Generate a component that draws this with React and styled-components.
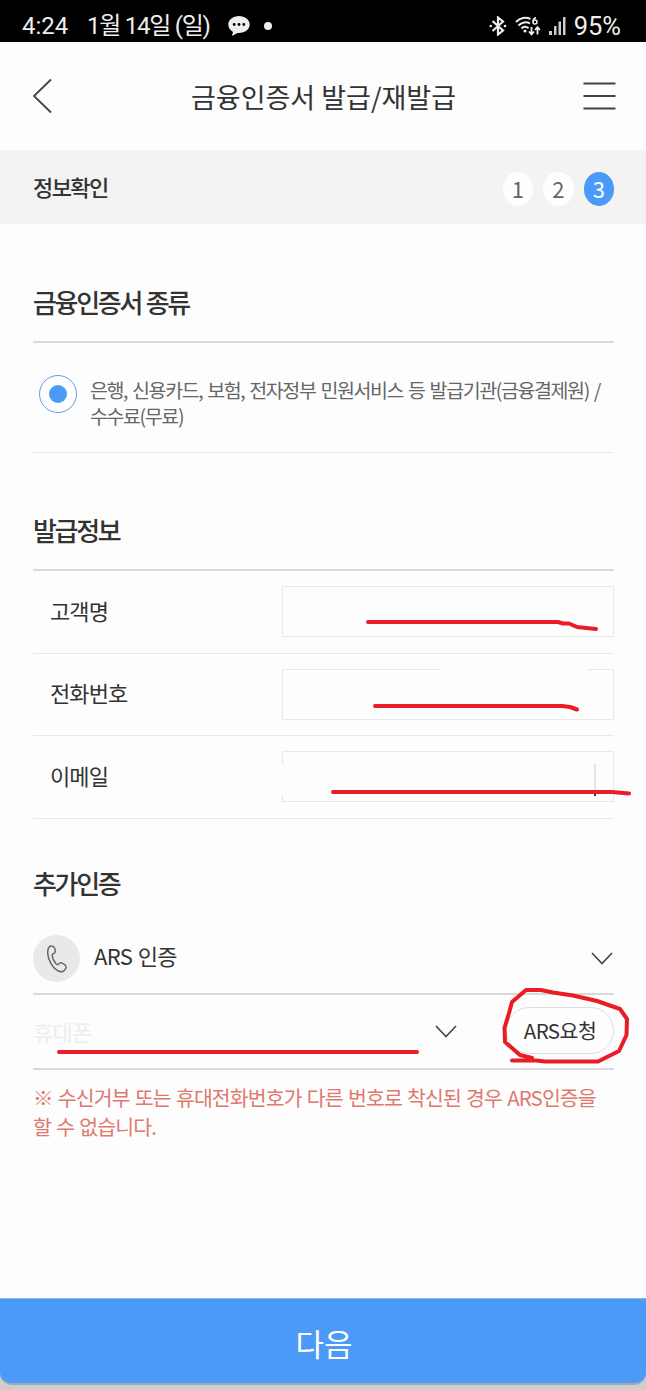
import React from 'react';
import styled, { createGlobalStyle } from 'styled-components';

const GlobalStyle = createGlobalStyle`
	* {
		box-sizing: border-box;
	}

	body {
		margin: 0;
		background: #fdfdfd;
		font-family: 'Noto Sans CJK KR', sans-serif;
		color: #333;
	}
`;

const Screen = styled.div`
	position: relative;
	display: flex;
	flex-direction: column;
	width: 646px;
	height: 1390px;
	overflow: hidden;
	background: #fdfdfd;
`;

const StatusBar = styled.header`
	display: flex;
	align-items: center;
	height: 42px;
	padding: 10px 25px 0 22px;
	background: #000;
	color: #eee;
	font-family: Roboto, 'Noto Sans CJK KR', sans-serif;
	font-size: 24px;
	line-height: 32px;
	white-space: nowrap;
`;

const Clock = styled.span`
	width: 65px;
`;

const Today = styled.span`
	width: 141px;
	letter-spacing: -1.25px;
`;

const StatusIcons = styled.div`
	display: flex;
	align-items: center;
	gap: 8px;
	margin-left: auto;
`;

const Battery = styled.span`
	font-size: 25.5px;
`;

const TitleBar = styled.nav`
	display: flex;
	align-items: center;
	justify-content: space-between;
	height: 108px;
	padding: 0 30px 0 32px;
`;

const Title = styled.h1`
	margin: 2px 0 0 10px;
	font-size: 27px;
	font-weight: 400;
	line-height: 40px;
	white-space: nowrap;
`;

const StepBar = styled.div`
	display: flex;
	align-items: center;
	justify-content: space-between;
	height: 74px;
	padding: 0 32px 0 33px;
	background: #f3f3f3;
`;

const StepName = styled.div`
	margin-top: -2px;
	font-size: 22px;
	font-weight: 500;
	letter-spacing: -1.6px;
`;

const Steps = styled.div`
	display: flex;
	gap: 10px;
	margin-top: 4px;
`;

const Step = styled.span`
	width: 30.5px;
	height: 34px;
	border-radius: 50%;
	background: ${({ $active }) => ($active ? '#4c9af8' : '#fefefe')};
	color: ${({ $active }) => ($active ? '#fff' : '#666')};
	font-size: 22px;
	line-height: 32px;
	text-align: center;
`;

const Content = styled.main`
	display: flex;
	flex: 1;
	flex-direction: column;
	padding: 0 32px 0 33px;
`;

const Heading = styled.h2`
	display: flex;
	align-items: flex-end;
	height: ${({ $height }) => $height}px;
	margin: 0;
	padding-bottom: ${({ $bottom }) => $bottom}px;
	border-bottom: ${({ $line }) => ($line ? '2px solid #d9d9d9' : 'none')};
	font-size: 26px;
	font-weight: 500;
	letter-spacing: -2.3px;
	line-height: 38px;
	word-spacing: 1px;
`;

const Option = styled.label`
	display: flex;
	gap: 13px;
	height: 110px;
	padding: 32px 0 0 6px;
	border-bottom: 1px solid #e8e8e8;
`;

const Radio = styled.span`
	display: grid;
	place-items: center;
	width: 38px;
	height: 38px;
	border: 1.5px solid #5c9fee;
	border-radius: 50%;

	&::after {
		content: '';
		width: 18px;
		height: 18px;
		border-radius: 50%;
		background: #4c9af8;
	}
`;

const OptionText = styled.span`
	padding-top: 2px;
	color: #666;
	font-size: 19.5px;
	letter-spacing: -1.4px;
	line-height: 26px;
	white-space: nowrap;
	word-spacing: 2px;
`;

const Field = styled.div`
	display: flex;
	align-items: center;
	justify-content: space-between;
	height: 82.5px;
	padding-left: 17px;
	border-bottom: 1px solid #e8e8e8;
`;

const FieldName = styled.span`
	margin-top: -4px;
	font-size: 22px;
	letter-spacing: -0.9px;
`;

const FieldBox = styled.div`
	position: relative;
	width: 332px;
	height: 51px;
	border: 1px solid #e8e8e8;
`;

// blanked-out part of a field, drawn over its border
const Blank = styled.span`
	position: absolute;
	top: ${({ $top }) => $top}px;
	left: ${({ $left }) => $left}px;
	width: ${({ $width }) => $width}px;
	height: ${({ $height }) => $height}px;
	background: #fefefe;
`;

const Cursor = styled.span`
	position: absolute;
	top: 12px;
	right: 17px;
	width: 2px;
	height: 32px;
	background: linear-gradient(#e4e4e4 28px, #333 28px);
`;

const MethodRow = styled.div`
	display: flex;
	align-items: center;
	height: 72px;
	padding-right: 1px;
	border-bottom: 2px solid #d9d9d9;
`;

const PhoneBadge = styled.span`
	display: grid;
	place-items: center;
	width: 47px;
	height: 47px;
	margin-top: 2px;
	border-radius: 50%;
	background: #e9e9e9;
`;

const MethodName = styled.span`
	flex: 1;
	margin: -5px 0 0 14px;
	font-size: 22px;
	letter-spacing: -0.6px;
	word-spacing: 1px;
`;

const NumberRow = styled.div`
	display: flex;
	align-items: center;
	height: 75px;
	border-bottom: 2px solid #d9d9d9;
`;

const NumberText = styled.span`
	flex: 1;
	color: #ededed;
	font-size: 22px;
	letter-spacing: -0.8px;
`;

const RequestButton = styled.button`
	width: 108px;
	height: 47px;
	margin: -2px 0 0 49px;
	padding: 0 0 1px;
	border: 1.5px solid #ddd;
	border-radius: 24px;
	background: #fefefe;
	color: #333;
	font-family: inherit;
	font-size: 20.5px;
	letter-spacing: -0.5px;
`;

const Warning = styled.p`
	margin: 13px 0 0;
	color: #e0786f;
	font-size: 20.5px;
	letter-spacing: -0.9px;
	line-height: 29px;
	white-space: nowrap;
	word-spacing: 1.5px;
`;

const Footer = styled.footer`
	height: 92px;
	background: #cfcdce;
`;

const NextButton = styled.button`
	display: block;
	width: 100%;
	height: 87px;
	padding: 3px 0 0 2px;
	border: 0;
	border-top: 1px solid #8fb6e6;
	border-bottom: 2px solid #a0a6b2;
	border-radius: 0 0 12px 12px;
	background: #4c9af8;
	color: #fff;
	font-family: inherit;
	font-size: 31px;
`;

const Markup = styled.svg`
	position: absolute;
	top: 0;
	left: 0;
	pointer-events: none;
`;

const ChatIcon = () => (
	<svg width="22" height="22" viewBox="0 0 22 22">
		<path d="M11 1C5 1 .3 4.7.3 9.6c0 3.2 1.800 5.800 4.700 7.300L3.900 21l5.600-3c7 .6 12.200-3.300 12.200-8.400C21.700 4.700 17 1 11 1z" fill="#eee" />
		<circle cx="6.200" cy="9.500" r="1.400" />
		<circle cx="11" cy="9.500" r="1.400" />
		<circle cx="15.800" cy="9.500" r="1.400" />
	</svg>
);

const Dot = styled.span`
	width: 8px;
	height: 8px;
	margin-left: 14px;
	border-radius: 50%;
	background: #eee;
`;

const BluetoothIcon = () => (
	<svg width="18" height="20" viewBox="0 0 18 20" fill="none" stroke="#eee" strokeWidth="2.200">
		<path d="M3.500 5l10.500 9.500L9 18.500v-17l5 4L3.500 15" />
		<circle cx="1.800" cy="10" r="1.300" fill="#eee" stroke="none" />
		<circle cx="16" cy="10" r="1.300" fill="#eee" stroke="none" />
	</svg>
);

const WifiIcon = () => (
	<svg width="26" height="20" viewBox="0 0 26 20" fill="none" stroke="#eee" strokeWidth="2">
		<path d="M1 6C5 1.500 11 .8 15.500 3M3.500 9.500c3-3.500 8-4 11.500-2M6.500 12.500c2-2.200 5-2.200 7-.3" />
		<circle cx="10" cy="15" r="1.600" fill="#eee" stroke="none" />
		<path d="M21 1.500c-2 .6-3 2.200-3 4" strokeWidth="1.500" />
		<circle cx="20" cy="6" r="2" strokeWidth="1.500" />
		<path d="M16.500 11v7M14 15.500l2.500 2.800 2.500-2.800M22.500 18.500v-7M20 14l2.500-2.800L25 14" strokeWidth="1.800" />
	</svg>
);

const SignalIcon = () => (
	<svg width="17" height="18" viewBox="0 0 17 18" fill="#ccc">
		<rect x="0" y="14" width="3" height="4" />
		<rect x="5" y="9" width="2.500" height="9" />
		<rect x="9.500" y="4.500" width="2.500" height="13.500" />
		<rect x="14" y="0" width="2.500" height="18" />
	</svg>
);

const BackIcon = () => (
	<svg width="22" height="36" viewBox="0 0 22 36" fill="none" stroke="#444" strokeWidth="1.800">
		<path d="M19 1.500L2 18l17 16.500" />
	</svg>
);

const MenuIcon = () => (
	<svg width="33" height="30" viewBox="0 0 33 30" stroke="#444" strokeWidth="2">
		<path d="M.5 2.500h32M.5 15h32M.5 27.500h32" />
	</svg>
);

const ChevronIcon = () => (
	<svg width="22" height="14" viewBox="0 0 22 14" fill="none" stroke="#444" strokeWidth="1.600">
		<path d="M1 2l10 10.500L21 2" />
	</svg>
);

const PhoneIcon = () => (
	<svg width="20" height="28" viewBox="0 0 20 28" fill="none" stroke="#666" strokeWidth="1.500">
		<path d="M3 1.200C1.300 2.500.6 4.500.7 8c.2 7 5.300 16 11.300 18.300 2 .8 4 .5 5.300-.9 1.300-1.400 2.300-2.900 1.700-4.200-.5-1.200-3-2.700-4.300-3.300-1.300-.6-2.200 0-3 1-.9 1-1.900.8-2.900-.3C7 16.500 5.500 13.500 5.200 10.700c-.1-1.200.3-1.600 1.200-1.900C8 8.300 8.500 6.800 8.200 5.200 7.800 2.500 6 .2 3 1.200z" />
	</svg>
);

const App = () => {
	return (
		<Screen>
			<GlobalStyle />
			<StatusBar>
				<Clock>4:24</Clock>
				<Today>1월 14일 (일)</Today>
				<ChatIcon />
				<Dot />
				<StatusIcons>
					<BluetoothIcon />
					<WifiIcon />
					<SignalIcon />
					<Battery>95%</Battery>
				</StatusIcons>
			</StatusBar>
			<TitleBar>
				<BackIcon />
				<Title>금융인증서 발급/재발급</Title>
				<MenuIcon />
			</TitleBar>
			<StepBar>
				<StepName>정보확인</StepName>
				<Steps>
					<Step>1</Step>
					<Step>2</Step>
					<Step $active>3</Step>
				</Steps>
			</StepBar>
			<Content>
				<Heading $height={119} $bottom={20} $line>금융인증서 종류</Heading>
				<Option>
					<Radio />
					<OptionText>
						은행, 신용카드, 보험, 전자정부 민원서비스 등 발급기관(금융결제원) /<br />
						수수료(무료)
					</OptionText>
				</Option>
				<Heading $height={118} $bottom={20} $line>발급정보</Heading>
				<Field>
					<FieldName>고객명</FieldName>
					<FieldBox />
				</Field>
				<Field>
					<FieldName>전화번호</FieldName>
					<FieldBox>
						<Blank $top={-1} $left={158} $width={147} $height={1} />
					</FieldBox>
				</Field>
				<Field>
					<FieldName>이메일</FieldName>
					<FieldBox>
						<Blank $top={12} $left={-9} $width={30} $height={31} />
						<Cursor />
					</FieldBox>
				</Field>
				<Heading $height={104} $bottom={21}>추가인증</Heading>
				<MethodRow>
					<PhoneBadge>
						<PhoneIcon />
					</PhoneBadge>
					<MethodName>ARS 인증</MethodName>
					<ChevronIcon />
				</MethodRow>
				<NumberRow>
					<NumberText>휴대폰</NumberText>
					<ChevronIcon />
					<RequestButton>ARS요청</RequestButton>
				</NumberRow>
				<Warning>
					※ 수신거부 또는 휴대전화번호가 다른 번호로 착신된 경우 ARS인증을<br />
					할 수 없습니다.
				</Warning>
			</Content>
			<Footer>
				<NextButton>다음</NextButton>
			</Footer>
			{/* red pen marks */}
			<Markup width="646" height="1390" fill="none" stroke="#ea1c24" strokeWidth="4" strokeLinecap="round" strokeLinejoin="round">
				<path d="M368 622H558L563 623.500H569L577 627L596 629" />
				<path d="M375 706H562L570 707L577 709.500" />
				<path d="M333 792H612L629 793.500" />
				<path d="M59 1052H417" />
				<path d="M532 1058L520 1055L505 1042L504.500 1028L509 1013L512 1002L526 990H541L553 992.500L573 995.500L597 1001L620 1009L627 1019L626.500 1035L619 1051L598 1061.500H545L536 1060.500H512" />
			</Markup>
		</Screen>
	);
};

export default App;
